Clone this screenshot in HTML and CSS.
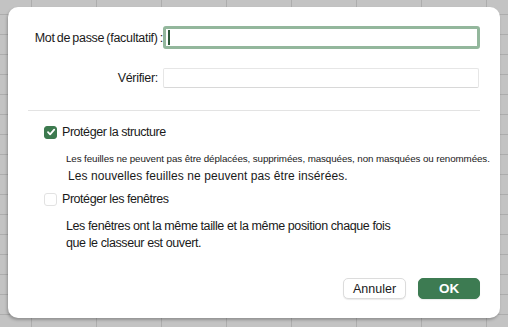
FILE: index.html
```html
<!DOCTYPE html>
<html lang="fr">
<head>
    <meta charset="UTF-8">
    <title>Protéger la structure et les fenêtres</title>
    <link rel="stylesheet" href="styles.css">
</head>
<body>
    <div class="dialog">
        <div class="field-row first">
            <label class="field-label" for="pwd">Mot de passe (facultatif) :</label>
            <div class="field-input focused" id="pwd"><span class="caret"></span></div>
        </div>
        <div class="field-row second">
            <label class="field-label">Vérifier:</label>
            <div class="field-input small"></div>
        </div>

        <div class="separator"></div>

        <div class="option">
            <span class="checkbox checked">
                <svg width="10" height="10" viewBox="0 0 10 10"><path d="M2 5.2 L4.1 7.3 L8.2 2.6" fill="none" stroke="#fff" stroke-width="1.8" stroke-linecap="round" stroke-linejoin="round"/></svg>
            </span>
            <span class="option-label">Protéger la structure</span>
        </div>
        <p class="desc tiny">Les feuilles ne peuvent pas être déplacées, supprimées, masquées, non masquées ou renommées.</p>
        <p class="desc wide">Les nouvelles feuilles ne peuvent pas être insérées.</p>

        <div class="option second-opt">
            <span class="checkbox"></span>
            <span class="option-label">Protéger les fenêtres</span>
        </div>
        <p class="desc block">Les fenêtres ont la même taille et la même position chaque fois<br>que le classeur est ouvert.</p>

        <div class="buttons">
            <button class="btn">Annuler</button>
            <button class="btn primary">OK</button>
        </div>
    </div>
</body>
</html>
```

FILE: styles.css
```css
* {
    margin: 0;
    padding: 0;
    box-sizing: border-box;
}

body {
    width: 508px;
    height: 327px;
    overflow: hidden;
    font-family: "Liberation Sans", Arial, sans-serif;
    color: #1a1a1a;
    background-color: #c3c3c3;
    background-image:
        repeating-linear-gradient(90deg, transparent 0 31px, #adadad 31px 32px, transparent 32px 65px),
        repeating-linear-gradient(180deg, transparent 0 14px, #adadad 14px 15px, transparent 15px 20px);
    background-size: 65px 20px;
    background-position: 0 0;
    padding: 7px 8px;
}

.dialog {
    width: 492px;
    height: 311px;
    background: #fff;
    border-radius: 10px;
    box-shadow: -1px 2px 3px rgba(0,0,0,0.25);
    padding: 19px 20px 0 20px;
    display: flex;
    flex-direction: column;
}

.field-row {
    display: flex;
    align-items: center;
}

.field-row.second {
    margin-top: 19px;
}

.field-label {
    flex: none;
    width: 135px;
    padding-right: 5px;
    text-align: right;
    white-space: nowrap;
    font-size: 12.5px;
    letter-spacing: -0.3px;
}

.field-row.first .field-label {
    padding-right: 0;
    word-spacing: -1px;
}

.field-input {
    flex: 1;
    height: 20px;
    border: 1px solid #e6e6e6;
    border-bottom-color: #d8d8d8;
    border-radius: 2px;
    margin-right: 1px;
}

.field-input.focused {
    height: 23px;
    margin-right: 0;
    border: 3px solid #93b79c;
    border-radius: 3px;
    position: relative;
}

.caret {
    position: absolute;
    left: 2px;
    top: 1px;
    width: 2px;
    height: 15px;
    background: #2e5a3a;
}

.separator {
    height: 1px;
    background: #e3e3e3;
    margin-top: 22px;
}

.option {
    display: flex;
    align-items: center;
    margin-top: 14px;
    padding-left: 16px;
}

.option.second-opt {
    margin-top: 9px;
}

.checkbox {
    width: 13px;
    height: 13px;
    border: 1px solid #e2e2e2;
    border-radius: 3px;
    display: flex;
    align-items: center;
    justify-content: center;
    margin-right: 5px;
}

.checkbox.checked {
    background: #3d7a4f;
    border-color: #3d7a4f;
}

.option-label {
    font-size: 12.5px;
    letter-spacing: -0.45px;
}

.desc {
    padding-left: 38px;
}

.desc.tiny {
    margin-top: 14px;
    white-space: nowrap;
    font-size: 9.8px;
    letter-spacing: -0.1px;
}

.desc.wide {
    margin-top: 5px;
    padding-left: 40px;
    font-size: 12px;
    letter-spacing: 0.08px;
}

.desc.block {
    margin-top: 12px;
    font-size: 12.5px;
    line-height: 17px;
    letter-spacing: -0.4px;
}

.buttons {
    margin-top: auto;
    margin-bottom: 19px;
    display: flex;
    justify-content: flex-end;
    gap: 12px;
}

.btn {
    font-family: "Liberation Sans", Arial, sans-serif;
    font-size: 12.5px;
    height: 21px;
    width: 63px;
    background: #fff;
    color: #1a1a1a;
    border: 1px solid #dcdcdc;
    border-radius: 5px;
    box-shadow: 0 1px 1px rgba(0,0,0,0.08);
}

.btn.primary {
    width: 62px;
    background: #3d7b52;
    border-color: #3d7b52;
    color: #fff;
    font-size: 13.5px;
    font-weight: bold;
}
```
